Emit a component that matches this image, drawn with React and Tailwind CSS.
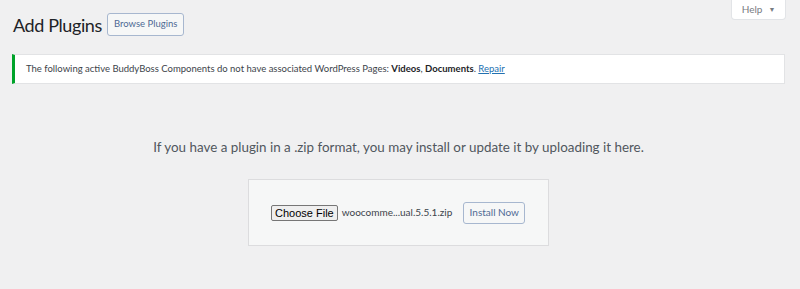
import React from 'react';

const App = () => {
  return (
    <div className="min-h-[289px] w-full bg-[#f0f0f1] pl-[12px] pr-[15px] font-['Lato','Liberation_Sans',sans-serif] text-[#3c434a]">
      {/* header row */}
      <div className="flex items-start justify-between">
        <div className="flex items-center gap-[5px] pt-[13px] pl-[1px]">
          <h1 className="text-[18px] leading-[22px] tracking-[-0.4px] text-[#1d2327]">Add Plugins</h1>
          <button className="h-[23px] rounded-[3px] border border-[#a7b7cf] bg-[#f6f7f7] px-[6px] text-[9.5px] text-[#4f6a94]">
            Browse Plugins
          </button>
        </div>
        <button className="flex h-[19px] w-[53px] items-center justify-center gap-[6px] rounded-b-[3px] bg-white text-[10px] text-[#787c82] shadow-[0_0_0_1px_#e2e4e7]">
          Help <span className="text-[7px]">▼</span>
        </button>
      </div>

      {/* notice */}
      <div className="mt-[18px] flex h-[30px] items-center border border-[#e2e3e5] border-l-[3px] border-l-[#00a32a] bg-white pl-[11px] text-[9.5px] text-[#3c434a]">
        <p>
          The following active BuddyBoss Components do not have associated WordPress Pages:{' '}
          <b className="font-bold text-[#1d2327]">Videos</b>,{' '}
          <b className="font-bold text-[#1d2327]">Documents</b>.{' '}
          <a className="text-[#2271b1] underline">Repair</a>
        </p>
      </div>

      {/* upload */}
      <p className="mt-[53px] text-center text-[13.4px] leading-[20px] text-[#50575e]">
        If you have a plugin in a .zip format, you may install or update it by uploading it here.
      </p>
      <div className="mx-auto mt-[22px] flex h-[67px] w-[301px] items-center border border-[#dcdcde] bg-[#f6f7f7] pl-[22px]">
        <button className="h-[16px] whitespace-nowrap rounded-[2px] border border-[#767676] bg-[#efefef] px-[3px] text-[11px] leading-[14px] text-black font-['Liberation_Sans',sans-serif]">
          Choose File
        </button>
        <span className="ml-[4px] whitespace-nowrap text-[10px] text-[#3c434a]">woocomme...ual.5.5.1.zip</span>
        <button className="ml-[11px] h-[22px] w-[62px] rounded-[3px] border border-[#a7b7cf] bg-[#f6f7f7] text-[10px] text-[#4f6a94]">
          Install Now
        </button>
      </div>
    </div>
  );
};

export default App;
